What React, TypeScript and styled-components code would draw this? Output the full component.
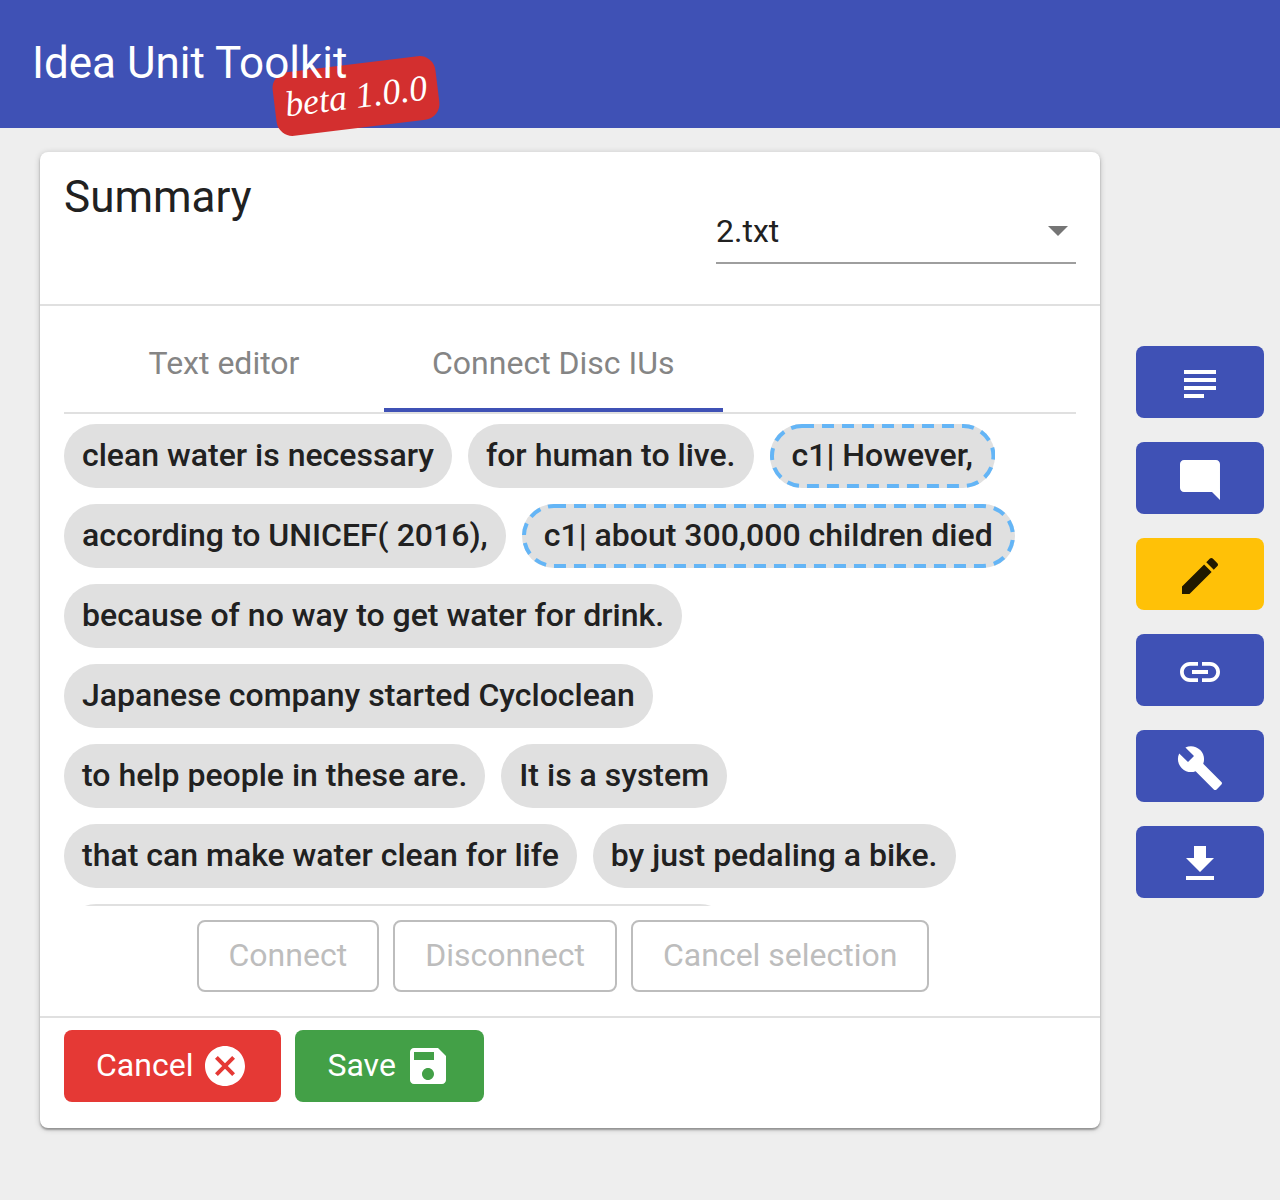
import React, { useState } from "react";
import styled, { createGlobalStyle } from "styled-components";

const GlobalStyle = createGlobalStyle`
  *, *::before, *::after { box-sizing: border-box; }
  body {
    margin: 0;
    min-height: 100vh;
    background: #eeeeee;
    color: #212121;
    font-family: Roboto, "Liberation Sans", sans-serif;
    font-size: 32px;
    line-height: 48px;
  }
  button, select { font: inherit; }
`;

const Header = styled.header`
  display: flex;
  align-items: center;
  height: 128px;
  padding: 0 32px 2px;
  background: #3f51b5;
  color: #ffffff;
`;

const Brand = styled.h1`
  position: relative;
  z-index: 0;
  margin: 0;
  font-size: 44px;
  font-weight: 400;
  line-height: 64px;
  white-space: nowrap;
`;

const VersionBadge = styled.span`
  position: absolute;
  z-index: -1;
  left: 242px;
  top: 33px;
  width: 164px;
  height: 64px;
  border-radius: 16px;
  background: #d32f2f;
  font-family: "Liberation Serif", serif;
  font-size: 36px;
  font-style: italic;
  line-height: 64px;
  text-align: center;
  transform: rotate(-7deg);
`;

const Main = styled.main`
  display: flex;
  align-items: flex-start;
  gap: 36px;
  padding: 24px 16px 72px 40px;
`;

const Card = styled.section`
  flex: 1;
  min-width: 0;
  border-radius: 8px;
  background: #ffffff;
  box-shadow: 0 2px 2px rgba(0, 0, 0, 0.3), 0 1px 6px rgba(0, 0, 0, 0.2);
`;

const CardHead = styled.div`
  display: flex;
  justify-content: space-between;
  align-items: flex-start;
  padding: 16px 24px 40px;
  border-bottom: 2px solid #e0e0e0;
`;

const CardTitle = styled.h2`
  margin: 0;
  font-size: 44px;
  font-weight: 400;
  line-height: 58px;
`;

const SelectField = styled.label`
  position: relative;
  display: block;
  width: 360px;
  margin-top: 32px;
  border-bottom: 2px solid #9e9e9e;
`;

const Select = styled.select`
  display: block;
  width: 100%;
  height: 62px;
  padding: 0;
  border: 0;
  outline: 0;
  appearance: none;
  background: transparent;
  color: #212121;
`;

const SelectArrow = styled.svg`
  position: absolute;
  right: -6px;
  top: 6px;
  width: 48px;
  height: 48px;
  fill: #757575;
  pointer-events: none;
`;

const CardBody = styled.div`
  padding: 0 24px 24px;
`;

const Tabs = styled.div`
  display: flex;
  border-bottom: 2px solid #e0e0e0;
`;

const Tab = styled.button<{ $active: boolean }>`
  min-width: 320px;
  height: 106px;
  padding: 12px 48px 0;
  border: 0;
  border-bottom: 4px solid ${(p) => (p.$active ? "#3f51b5" : "transparent")};
  background: transparent;
  color: #858585;
  cursor: pointer;
`;

const Chips = styled.div`
  display: flex;
  flex-wrap: wrap;
  align-content: flex-start;
  gap: 16px;
  max-height: 492px;
  padding-top: 10px;
  overflow-y: auto;
  scrollbar-width: none;
`;

const Chip = styled.button<{ $linked?: boolean }>`
  position: relative;
  height: 64px;
  padding: 0 ${(p) => (p.$linked ? 22 : 18)}px 2px;
  border: 0;
  border-radius: 32px;
  background: #e0e0e0;
  color: #212121;
  font-weight: 500;
  white-space: nowrap;
  cursor: pointer;
`;

const DashedOutline = styled.svg`
  position: absolute;
  inset: 0;
  width: 100%;
  height: 100%;
  pointer-events: none;

  rect {
    width: calc(100% - 4px);
    height: calc(100% - 4px);
    fill: none;
    stroke: #64b5f6;
    stroke-width: 4px;
    stroke-dasharray: 12 8;
  }
`;

const EmptyChip = styled.span`
  width: 668px;
  height: 64px;
  border-radius: 32px;
  background: #e0e0e0;
`;

const LinkActions = styled.div`
  display: flex;
  justify-content: center;
  gap: 14px;
  padding: 14px 14px 0 0;
`;

const OutlineButton = styled.button`
  height: 72px;
  padding: 0 30px 2px;
  border: 2px solid #bdbdbd;
  border-radius: 8px;
  background: transparent;
  color: #bdbdbd;
  white-space: nowrap;
`;

const CardFoot = styled.div`
  display: flex;
  gap: 14px;
  padding: 12px 24px 26px;
  border-top: 2px solid #e0e0e0;
`;

const SolidButton = styled.button<{ $color: string }>`
  display: flex;
  align-items: center;
  gap: 8px;
  height: 72px;
  padding: 0 32px;
  border: 0;
  border-radius: 8px;
  background: ${(p) => p.$color};
  color: #ffffff;
  cursor: pointer;
`;

const ButtonText = styled.span`
  padding-bottom: 2px;
`;

const Icon = styled.svg`
  display: block;
  width: 48px;
  height: 48px;
  fill: currentColor;
`;

const Sidebar = styled.nav`
  display: flex;
  flex-direction: column;
  gap: 24px;
  width: 128px;
  margin-top: 194px;
`;

const ToolButton = styled.button<{ $active: boolean }>`
  display: flex;
  justify-content: center;
  height: 72px;
  padding: 14px 0 0;
  border: 0;
  border-radius: 8px;
  background: ${(p) => (p.$active ? "#ffc107" : "#3f51b5")};
  color: ${(p) => (p.$active ? "rgba(0, 0, 0, 0.87)" : "#ffffff")};
  cursor: pointer;
`;

const tools = [
  { label: "Text", path: "M14 17H4v2h10v-2zm6-8H4v2h16V9zM4 15h16v-2H4v2zM4 5v2h16V5H4z" },
  { label: "Comment", path: "M21.99 4c0-1.1-.89-2-1.99-2H4c-1.1 0-2 .9-2 2v12c0 1.1.9 2 2 2h14l4 4-.01-18z" },
  {
    label: "Edit",
    path: "M3 17.25V21h3.75L17.81 9.94l-3.75-3.75L3 17.25zM20.71 7.04c.39-.39.39-1.02 0-1.41l-2.34-2.34c-.39-.39-1.02-.39-1.41 0l-1.83 1.83 3.75 3.75 1.83-1.83z",
  },
  {
    label: "Link",
    path: "M3.9 12c0-1.71 1.39-3.1 3.1-3.1h4V7H7c-2.76 0-5 2.24-5 5s2.24 5 5 5h4v-1.9H7c-1.71 0-3.1-1.39-3.1-3.1zM8 13h8v-2H8v2zm9-6h-4v1.9h4c1.71 0 3.1 1.39 3.1 3.1s-1.39 3.1-3.1 3.1h-4V17h4c2.76 0 5-2.24 5-5s-2.24-5-5-5z",
  },
  {
    label: "Settings",
    path: "M22.7 19l-9.1-9.1c.9-2.3.4-5-1.5-6.9-2-2-5-2.4-7.4-1.3L9 6 6 9 1.6 4.7C.4 7.1.9 10.1 2.9 12.1c1.9 1.9 4.6 2.4 6.9 1.5l9.1 9.1c.4.4 1 .4 1.4 0l2.3-2.3c.5-.4.5-1.1.1-1.4z",
  },
  { label: "Download", path: "M19 9h-4V3H9v6H5l7 7 7-7zM5 18v2h14v-2H5z" },
];

const units = [
  { text: "clean water is necessary" },
  { text: "for human to live." },
  { text: "c1| However,", linked: true },
  { text: "according to UNICEF( 2016)," },
  { text: "c1| about 300,000 children died", linked: true },
  { text: "because of no way to get water for drink." },
  { text: "Japanese company started Cycloclean" },
  { text: "to help people in these are." },
  { text: "It is a system" },
  { text: "that can make water clean for life" },
  { text: "by just pedaling a bike." },
];

const tabs = ["Text editor", "Connect Disc IUs"];

export default function App() {
  const [tab, setTab] = useState(1);
  const [tool, setTool] = useState("Edit");

  return (
    <>
      <GlobalStyle />
      <Header>
        <Brand>
          Idea Unit Toolkit
          <VersionBadge>beta 1.0.0</VersionBadge>
        </Brand>
      </Header>
      <Main>
        <Card>
          <CardHead>
            <CardTitle>Summary</CardTitle>
            <SelectField>
              <Select aria-label="File" defaultValue="2.txt">
                <option>2.txt</option>
              </Select>
              <SelectArrow viewBox="0 0 24 24" aria-hidden="true">
                <path d="M7 10l5 5 5-5z" />
              </SelectArrow>
            </SelectField>
          </CardHead>
          <CardBody>
            <Tabs role="tablist">
              {tabs.map((name, i) => (
                <Tab key={name} role="tab" aria-selected={tab === i} $active={tab === i} onClick={() => setTab(i)}>
                  {name}
                </Tab>
              ))}
            </Tabs>
            <Chips>
              {units.map((unit) => (
                <Chip key={unit.text} $linked={unit.linked}>
                  {unit.text}
                  {unit.linked && (
                    <DashedOutline aria-hidden="true">
                      <rect x="2" y="2" rx="30" ry="30" />
                    </DashedOutline>
                  )}
                </Chip>
              ))}
              <EmptyChip />
            </Chips>
            <LinkActions>
              <OutlineButton disabled>Connect</OutlineButton>
              <OutlineButton disabled>Disconnect</OutlineButton>
              <OutlineButton disabled>Cancel selection</OutlineButton>
            </LinkActions>
          </CardBody>
          <CardFoot>
            <SolidButton $color="#e53935">
              <ButtonText>Cancel</ButtonText>
              <Icon viewBox="0 0 24 24" aria-hidden="true">
                <path d="M12 2C6.47 2 2 6.47 2 12s4.47 10 10 10 10-4.47 10-10S17.53 2 12 2zm5 13.59L15.59 17 12 13.41 8.41 17 7 15.59 10.59 12 7 8.41 8.41 7 12 10.59 15.59 7 17 8.41 13.41 12 17 15.59z" />
              </Icon>
            </SolidButton>
            <SolidButton $color="#43a047">
              <ButtonText>Save</ButtonText>
              <Icon viewBox="0 0 24 24" aria-hidden="true">
                <path d="M17 3H5c-1.11 0-2 .9-2 2v14c0 1.1.89 2 2 2h14c1.1 0 2-.9 2-2V7l-4-4zm-5 16c-1.66 0-3-1.34-3-3s1.34-3 3-3 3 1.34 3 3-1.34 3-3 3zm3-10H5V5h10v4z" />
              </Icon>
            </SolidButton>
          </CardFoot>
        </Card>
        <Sidebar>
          {tools.map(({ label, path }) => (
            <ToolButton key={label} aria-label={label} $active={tool === label} onClick={() => setTool(label)}>
              <Icon viewBox="0 0 24 24" aria-hidden="true">
                <path d={path} />
              </Icon>
            </ToolButton>
          ))}
        </Sidebar>
      </Main>
    </>
  );
}
